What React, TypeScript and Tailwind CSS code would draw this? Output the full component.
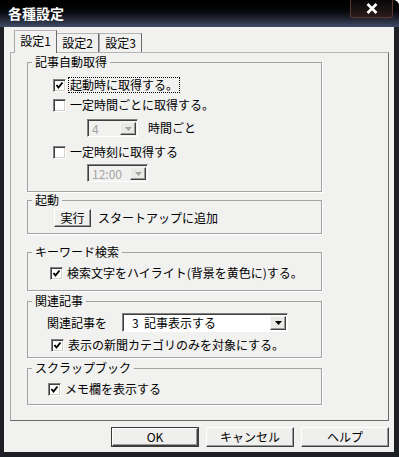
import type { ReactNode } from 'react';

const FONT = "font-['Noto_Sans_CJK_JP','Noto_Sans',sans-serif]";

function CheckBox({ checked }: { checked?: boolean }) {
  return (
    <span className="flex h-[13px] w-[13px] shrink-0 items-center justify-center border border-t-[#808080] border-l-[#808080] border-r-white border-b-white bg-white shadow-[inset_1px_1px_0_#404040,inset_-1px_-1px_0_#d4d0c8]">
      {checked && (
        <svg width="9" height="9" viewBox="0 0 9 9">
          <polyline points="1.5,4 3.5,6.5 7.5,1.5" fill="none" stroke="#000" strokeWidth="1.9" />
        </svg>
      )}
    </span>
  );
}

function CheckRow({
  label,
  checked,
  focused,
  className = '',
}: {
  label: string;
  checked?: boolean;
  focused?: boolean;
  className?: string;
}) {
  return (
    <div className={`flex h-[16px] items-center ${className}`}>
      <CheckBox checked={checked} />
      <span
        className={`ml-[2px] flex h-[16px] items-center whitespace-nowrap border px-[1px] leading-none ${
          focused ? 'border-dotted border-black' : 'border-transparent'
        }`}
      >
        {label}
      </span>
    </div>
  );
}

function Combo({
  value,
  disabled,
  className = '',
  textClass = 'pl-[4px]',
}: {
  value: string;
  disabled?: boolean;
  className?: string;
  textClass?: string;
}) {
  return (
    <div
      className={`flex border border-t-[#808080] border-l-[#808080] border-r-white border-b-white shadow-[inset_1px_1px_0_#404040] ${
        disabled ? 'bg-[#f1f1ef] text-[#a3a3a3]' : 'bg-white text-black'
      } ${className}`}
    >
      <span className={`flex flex-1 items-center whitespace-pre pt-[1px] leading-none ${textClass}`}>{value}</span>
      <span className="m-[1px] mt-[2px] flex w-[16px] items-center justify-center border border-t-[#f4f4f4] border-l-[#f4f4f4] border-r-[#404040] border-b-[#404040] bg-[#e9e9e6] shadow-[inset_-1px_-1px_0_#9a9a9a]">
        <svg width="7" height="4" viewBox="0 0 7 4">
          <polygon points="0,0 7,0 3.5,4" fill={disabled ? '#a3a3a3' : '#000'} />
        </svg>
      </span>
    </div>
  );
}

function Group({
  title,
  className = '',
  children,
}: {
  title: string;
  className?: string;
  children: ReactNode;
}) {
  return (
    <fieldset
      className={`ml-[16px] w-[295px] border border-[#a3a3a3] shadow-[1px_1px_0_#fff] ${className}`}
    >
      <legend className="ml-[4px] bg-[#f1f1ef] px-[3px] text-[12px] leading-[14px]">{title}</legend>
      {children}
    </fieldset>
  );
}

function DlgButton({ label, isDefault }: { label: string; isDefault?: boolean }) {
  return (
    <button
      type="button"
      className={`h-[20px] w-[88px] ${isDefault ? 'border border-[#3a3a3a]' : ''}`}
    >
      <span className="flex h-full w-full items-center justify-center border border-t-white border-l-white border-r-[#404040] border-b-[#404040] bg-[#efefed] text-[12px] leading-none shadow-[inset_-1px_-1px_0_#9a9a9a]">
        {label}
      </span>
    </button>
  );
}

function Tab({ label, active }: { label: string; active?: boolean }) {
  return (
    <div
      className={`flex items-center justify-center border border-b-0 border-t-[#b5b5b5] border-l-[#a8a8a8] border-r-[#6a6a6a] bg-[#f1f1ef] text-[12px] leading-none ${
        active ? 'relative z-10 -mx-[1px] -mb-px h-[23px] w-[43px] pb-[2px]' : 'h-[19px] w-[43px]'
      }`}
    >
      {label}
    </div>
  );
}

export default function App() {
  return (
    <div
      className={`flex h-[457px] w-[399px] flex-col overflow-hidden rounded-tr-[6px] bg-[#1e1f24] text-[12px] text-black ${FONT}`}
    >
      {/* title bar */}
      <div className="flex h-[27px] shrink-0 items-start bg-gradient-to-b from-[#000000] via-[#0e1016] to-[#404b66]">
        <span className="ml-[8px] mt-[4px] text-[14px] font-bold leading-[18px] text-white">各種設定</span>
        <button
          type="button"
          className="ml-auto mr-[6px] flex h-[18px] w-[43px] items-center justify-center rounded-b-[3px] border border-t-0 border-[#5c3530] bg-gradient-to-b from-[#070707] to-[#2a1c1c]"
        >
          <svg width="12" height="11" viewBox="0 0 12 11">
            <path d="M1.5 1 L10.5 10 M10.5 1 L1.5 10" stroke="#fff" strokeWidth="2.6" />
          </svg>
        </button>
      </div>

      {/* client area */}
      <div className="mb-[5px] ml-[4px] mr-[5px] flex flex-1 flex-col bg-[#f1f1ef]">
        <div className="flex h-[25px] items-end pl-[11px]">
          <Tab label="設定1" active />
          <Tab label="設定2" />
          <Tab label="設定3" />
        </div>

        <div className="ml-[6px] flex h-[369px] w-[379px] flex-col border border-t-[#b5b5b5] border-l-[#a8a8a8] border-r-[#6a6a6a] border-b-[#6a6a6a]">
          <Group title="記事自動取得" className="mt-[2px]">
            <div className="flex flex-col pb-[9px] pl-[25px]">
              <CheckRow label="起動時に取得する。" checked focused className="mt-[8px]" />
              <CheckRow label="一定時間ごとに取得する。" className="mt-[4px]" />
              <div className="ml-[34px] mt-[6px] flex items-center">
                <Combo value="4" disabled className="h-[18px] w-[51px]" />
                <span className="ml-[10px] leading-none">時間ごと</span>
              </div>
              <CheckRow label="一定時刻に取得する" className="mt-[7px]" />
              <Combo value="12:00" disabled className="ml-[34px] mt-[4px] h-[18px] w-[61px]" />
            </div>
          </Group>

          <Group title="起動" className="mt-[1px]">
            <div className="flex items-center pb-[6px] pl-[26px] pt-[2px]">
              <button
                type="button"
                className="flex h-[18px] w-[37px] items-center justify-center border border-t-white border-l-white border-r-[#404040] border-b-[#404040] bg-[#efefed] leading-none shadow-[inset_-1px_-1px_0_#9a9a9a]"
              >
                実行
              </button>
              <span className="ml-[7px] leading-none">スタートアップに追加</span>
            </div>
          </Group>

          <Group title="キーワード検索" className="mt-[11px]">
            <div className="flex flex-col pb-[9px] pl-[22px] pt-[6px]">
              <CheckRow label="検索文字をハイライト(背景を黄色に)する。" checked />
            </div>
          </Group>

          <Group title="関連記事" className="mt-[3px]">
            <div className="flex flex-col pb-[4px] pt-[5px]">
              <div className="flex h-[19px] items-center pl-[19px]">
                <span className="w-[60px] leading-none">関連記事を</span>
                <Combo value="3  記事表示する" textClass="pl-[9px]" className="ml-[15px] h-[19px] w-[166px]" />
              </div>
              <CheckRow label="表示の新聞カテゴリのみを対象にする。" checked className="ml-[23px] mt-[5px]" />
            </div>
          </Group>

          <Group title="スクラップブック" className="mt-[3px]">
            <div className="flex flex-col pb-[7px] pl-[20px] pt-[6px]">
              <CheckRow label="メモ欄を表示する" checked />
            </div>
          </Group>
        </div>

        <div className="mt-[6px] flex justify-end gap-[7px] pr-[5px]">
          <DlgButton label="OK" isDefault />
          <DlgButton label="キャンセル" />
          <DlgButton label="ヘルプ" />
        </div>
      </div>
    </div>
  );
}
